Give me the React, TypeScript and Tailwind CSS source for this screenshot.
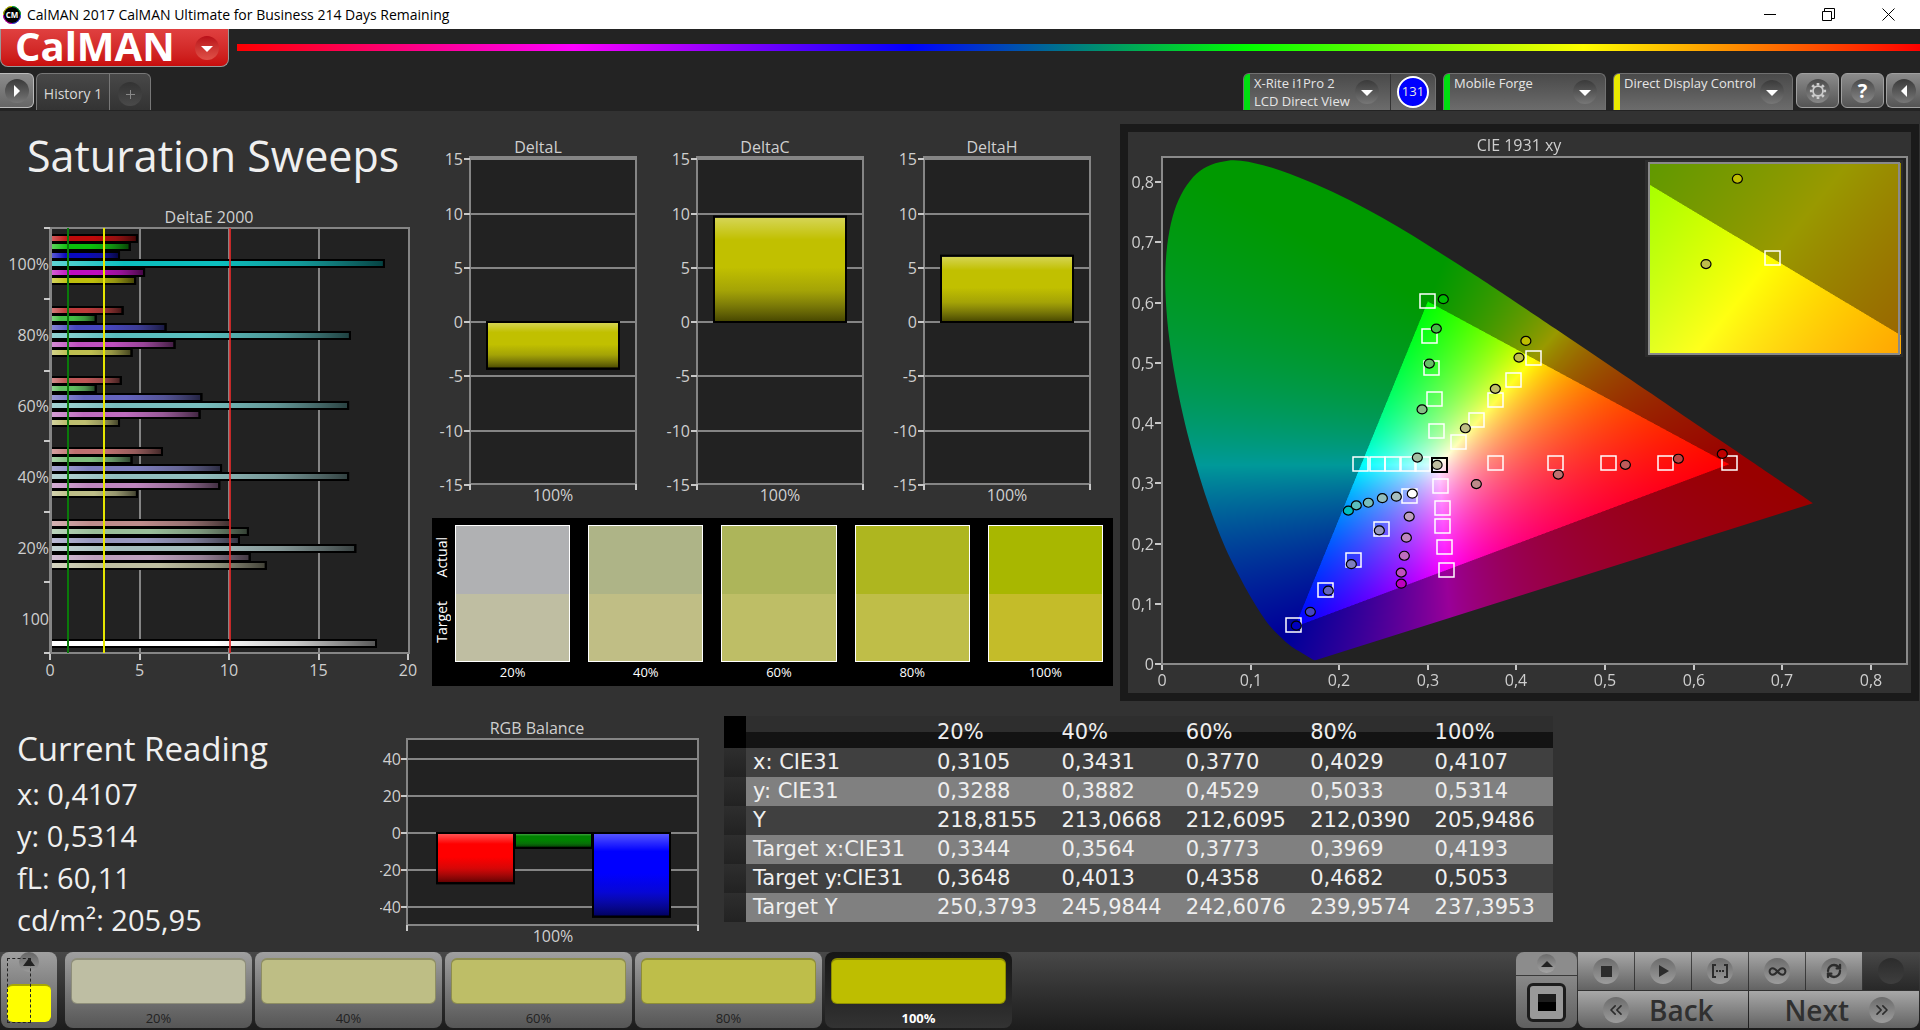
import React, { useEffect, useRef } from 'react';
import { ChevronsLeft, ChevronsRight, Infinity as InfinityIcon, RefreshCw } from 'lucide-react';

type Point = [number, number];

const LEVELS = ['20%', '40%', '60%', '80%', '100%'];

const PATCHES = [
  { label: '20%', actual: '#b0b1b3', target: '#bfbea2', button: '#bebea3' },
  { label: '40%', actual: '#aeb487', target: '#c0be85', button: '#bebe85' },
  { label: '60%', actual: '#adb55a', target: '#bebe66', button: '#bebe67' },
  { label: '80%', actual: '#aeb61f', target: '#bfbe48', button: '#bebe4a' },
  { label: '100%', actual: '#a8b700', target: '#c4bc29', button: '#bebe00' },
];

const READINGS = [
  { name: 'x: CIE31', values: ['0,3105', '0,3431', '0,3770', '0,4029', '0,4107'] },
  { name: 'y: CIE31', values: ['0,3288', '0,3882', '0,4529', '0,5033', '0,5314'] },
  { name: 'Y', values: ['218,8155', '213,0668', '212,6095', '212,0390', '205,9486'] },
  { name: 'Target x:CIE31', values: ['0,3344', '0,3564', '0,3773', '0,3969', '0,4193'] },
  { name: 'Target y:CIE31', values: ['0,3648', '0,4013', '0,4358', '0,4682', '0,5053'] },
  { name: 'Target Y', values: ['250,3793', '245,9844', '242,6076', '239,9574', '237,3953'] },
];

const DELTA_E = [
  { y: 33, colors: ['#be0a0a', '#0abe0a', '#0a0abe', '#0cbebe', '#be0cbe', '#bebe0c'], values: [4.8, 4.4, 3.8, 18.6, 5.2, 4.7] },
  { y: 105, colors: ['#be3a3a', '#44be44', '#4646be', '#5abebe', '#be50be', '#bebe50'], values: [4, 2.5, 6.4, 16.7, 6.9, 4.5] },
  { y: 175, colors: ['#be5656', '#60be60', '#6464be', '#78bebe', '#be6cbe', '#bebe70'], values: [3.9, 2.5, 8.4, 16.6, 8.3, 3.8] },
  { y: 246, colors: ['#be7070', '#7ebe7e', '#7e7ebe', '#92bebe', '#be86be', '#bebe88'], values: [6.2, 4.5, 9.5, 16.6, 9.4, 4.8] },
  { y: 318, colors: ['#be8c8c', '#9abe9a', '#9898be', '#a6bebe', '#bea0be', '#bebea0'], values: [10, 11, 10.5, 17, 11.1, 12] },
];

// Spectral locus, CIE 1931 2 degree observer
const LOCUS: Point[] = [
  [0.1741, 0.005], [0.1714, 0.0051], [0.1644, 0.0109], [0.1566, 0.0177], [0.144, 0.0297], [0.1241, 0.0578],
  [0.1096, 0.0868], [0.0913, 0.1327], [0.0687, 0.2007], [0.0454, 0.295], [0.0235, 0.4127], [0.0082, 0.5384],
  [0.0039, 0.6548], [0.0139, 0.7502], [0.0389, 0.812], [0.0743, 0.8338], [0.1142, 0.8262], [0.1547, 0.8059],
  [0.1929, 0.7816], [0.2296, 0.7543], [0.2658, 0.7243], [0.3016, 0.6923], [0.3373, 0.6589], [0.3731, 0.6245],
  [0.4441, 0.5547], [0.5125, 0.4866], [0.5752, 0.4242], [0.627, 0.3725], [0.6658, 0.334], [0.6915, 0.3083],
  [0.719, 0.2809], [0.7347, 0.2653],
];

const TARGETS: Point[] = [
  [0.299, 0.601], [0.3017, 0.543], [0.304, 0.4895], [0.3074, 0.439], [0.309, 0.3846],
  [0.2239, 0.3297], [0.2423, 0.3297], [0.26, 0.3297], [0.2777, 0.3297], [0.2938, 0.3297],
  [0.4185, 0.5055], [0.3958, 0.469], [0.3762, 0.436], [0.3548, 0.404], [0.3341, 0.3666],
  [0.3762, 0.3316], [0.4436, 0.3316], [0.5038, 0.3316], [0.5673, 0.3316], [0.6396, 0.3316],
  [0.3141, 0.294], [0.3164, 0.2573], [0.3164, 0.2273], [0.3183, 0.1923], [0.32, 0.155],
  [0.279, 0.2766], [0.2476, 0.223], [0.216, 0.1705], [0.184, 0.1205], [0.148, 0.0624],
];

const MEASURED: [number, number, string][] = [
  [0.3175, 0.6038, '#00be00'], [0.3096, 0.555, '#42be42'], [0.3017, 0.497, '#66be66'], [0.2935, 0.4208, '#85be85'], [0.2882, 0.341, '#a2bea2'],
  [0.4107, 0.5345, '#bebe00'], [0.4029, 0.507, '#bebe4a'], [0.3762, 0.455, '#bebe66'], [0.3424, 0.3896, '#bebe85'], [0.3105, 0.3288, '#bebea2'],
  [0.6324, 0.347, '#be0000'], [0.5828, 0.339, '#be4242'], [0.523, 0.329, '#be5a5a'], [0.4473, 0.3128, '#be7070'], [0.3548, 0.297, '#be8a8a'],
  [0.2103, 0.2529, '#00bebe'], [0.2193, 0.2616, '#5abebe'], [0.2329, 0.266, '#78bebe'], [0.2487, 0.2735, '#92bebe'], [0.2645, 0.276, '#a6bebe'],
  [0.27, 0.1317, '#be00be'], [0.27, 0.15, '#be50be'], [0.2735, 0.178, '#be6cbe'], [0.2758, 0.208, '#be86be'], [0.279, 0.243, '#bea0be'],
  [0.1516, 0.062, '#0000be'], [0.1674, 0.085, '#4646be'], [0.1877, 0.12, '#6464be'], [0.2137, 0.164, '#7e7ebe'], [0.2453, 0.22, '#9898be'],
  [0.2825, 0.281, '#ffffff'],
];

const Defs: React.FC = () => (
  <svg className="absolute h-0 w-0" aria-hidden="true">
    <defs>
      <linearGradient id="gloss-x" x1="0" y1="0" x2="1" y2="0">
        <stop offset="0" stopColor="#fff" stopOpacity="0.35" />
        <stop offset="0.22" stopColor="#fff" stopOpacity="0" />
        <stop offset="0.5" stopColor="#222" stopOpacity="0" />
        <stop offset="0.75" stopColor="#222" stopOpacity="0.25" />
        <stop offset="1" stopColor="#000" stopOpacity="0.66" />
      </linearGradient>
      <linearGradient id="gloss-y" x1="0" y1="0" x2="0" y2="1">
        <stop offset="0" stopColor="#fff" stopOpacity="0.35" />
        <stop offset="0.22" stopColor="#fff" stopOpacity="0" />
        <stop offset="0.48" stopColor="#222" stopOpacity="0" />
        <stop offset="0.7" stopColor="#222" stopOpacity="0.18" />
        <stop offset="1" stopColor="#000" stopOpacity="0.64" />
      </linearGradient>
    </defs>
  </svg>
);

const GlossyBar: React.FC<{ x: number; y: number; w: number; h: number; color: string; gloss: 'x' | 'y' }> = ({ x, y, w, h, color, gloss }) => (
  <g stroke="#000" strokeWidth="2">
    <rect x={x} y={y} width={w} height={h} fill={color} />
    <rect x={x} y={y} width={w} height={h} fill={gloss === 'x' ? 'url(#gloss-x)' : 'url(#gloss-y)'} />
  </g>
);

const DeltaEChart: React.FC = () => {
  const px = (v: number) => 50 + v * 17.9;
  return (
    <svg viewBox="0 0 432 480" className="w-full" fontFamily="'Open Sans', sans-serif" fontSize="16" fill="#cfcfcf">
      <text x="209" y="18" textAnchor="middle">DeltaE 2000</text>
      <rect x="50" y="23" width="359" height="425" fill="#222" />
      <g stroke="#858585" strokeWidth="2" fill="none">
        {[5, 10, 15].map((v) => <path key={v} d={`M${Math.round(px(v))} 23V448`} />)}
        <rect x="50" y="23" width="359" height="425" />
      </g>
      <g stroke="#c8c8c8" strokeWidth="2">
        {[23, 94, 166, 236, 307, 377, 448].map((y) => <path key={y} d={`M44 ${y}H50`} />)}
        {[0, 5, 10, 15, 20].map((v) => <path key={v} d={`M${Math.round(px(v))} 449V455`} />)}
      </g>
      {DELTA_E.map((group) =>
        group.values.map((v, i) => (
          <GlossyBar key={`${group.y}-${i}`} x={51} y={group.y - 3 + Math.round(i * 8.4)} w={v * 17.9} h={7} color={group.colors[i]} gloss="x" />
        ))
      )}
      <GlossyBar x={51} y={435} w={325} h={7} color="#fff" gloss="x" />
      <path d="M51 23V448" stroke="#858585" strokeWidth="2" />
      <g strokeWidth="2">
        <path d="M68 23V448" stroke="#0a7a0a" />
        <path d="M104 23V448" stroke="#e6e600" />
        <path d="M230 23V448" stroke="#e02828" strokeOpacity="0.85" />
      </g>
      {['100%', '80%', '60%', '40%', '20%', '100'].map((label, i) => (
        <text key={i} x="49" y={65 + i * 71} textAnchor="end">{label}</text>
      ))}
      {[0, 5, 10, 15, 20].map((v) => (
        <text key={v} x={px(v)} y="471" textAnchor="middle">{v}</text>
      ))}
    </svg>
  );
};

const DeltaChart: React.FC<{ title: string; value: number }> = ({ title, value }) => {
  const py = (v: number) => 187 - v * 10.85;
  return (
    <svg viewBox="0 0 227 380" className="w-full" fontFamily="'Open Sans', sans-serif" fontSize="16" fill="#cfcfcf">
      <text x="102" y="18" textAnchor="middle">{title}</text>
      <rect x="34" y="22" width="166" height="327" fill="#222" />
      <g stroke="#858585" strokeWidth="2" fill="none">
        <rect x="34" y="22" width="166" height="327" />
        {[15, 10, 5, 0, -5, -10].map((v) => <path key={v} d={`M34 ${Math.round(py(v))}H200`} />)}
      </g>
      <g stroke="#c8c8c8" strokeWidth="2">
        {[15, 10, 5, 0, -5, -10, -15].map((v) => <path key={v} d={`M28 ${Math.round(py(v))}H34`} />)}
        <path d="M34 349V355M200 349V355" />
      </g>
      <GlossyBar x={51} y={value > 0 ? py(value) : 187} w={132} h={Math.abs(value) * 10.85} color="#c1c000" gloss="y" />
      {[15, 10, 5, 0, -5, -10, -15].map((v) => (
        <text key={v} x="27" y={Math.round(py(v)) + 6} textAnchor="end">{v}</text>
      ))}
      <text x="117" y="366" textAnchor="middle">100%</text>
    </svg>
  );
};

const RgbBalance: React.FC = () => {
  const py = (v: number) => 115 - v * 1.86;
  const bars = [
    { x: 57, value: 27, color: '#ff0000' },
    { x: 135, value: 8, color: '#008200' },
    { x: 213, value: 45, color: '#0000ff' },
  ];
  return (
    <svg viewBox="0 0 334 230" className="w-full" fontFamily="'Open Sans', sans-serif" fontSize="16" fill="#cfcfcf">
      <text x="157" y="16" textAnchor="middle">RGB Balance</text>
      <rect x="27" y="21" width="291" height="186" fill="#222" />
      <g stroke="#858585" strokeWidth="2" fill="none">
        <rect x="27" y="21" width="291" height="186" />
        {[40, 20, 0, -20, -40].map((v) => <path key={v} d={`M27 ${Math.round(py(v))}H318`} />)}
      </g>
      <g stroke="#c8c8c8" strokeWidth="2">
        {[40, 20, 0, -20, -40].map((v) => <path key={v} d={`M21 ${Math.round(py(v))}H27`} />)}
        <path d="M27 207V213M318 207V213" />
      </g>
      {bars.map((b) => <GlossyBar key={b.x} x={b.x} y={115} w={77} h={b.value * 1.86} color={b.color} gloss="y" />)}
      {[40, 20, 0, -20, -40].map((v) => (
        <text key={v} x="21" y={Math.round(py(v)) + 6} textAnchor="end">{v}</text>
      ))}
      <text x="173" y="224" textAnchor="middle">100%</text>
    </svg>
  );
};

// Chromaticity plot geometry
const cx = (v: number) => 34 + v * 886;
const cy = (v: number) => 531 - v * 602.5;
const insetX = (v: number) => 644 + (v - 0.4193) * 4024;
const insetY = (v: number) => 126 - (v - 0.5053) * 3036;

// Linear Rec.709 colour at full brightness; dimmed outside the triangle
function chromaColor(x: number, y: number): [number, number, number] {
  const X = x / y;
  const Z = (1 - x - y) / y;
  let r = 3.2406 * X - 1.5372 - 0.4986 * Z;
  let g = -0.9689 * X + 1.8758 + 0.0415 * Z;
  let b = 0.0557 * X - 0.204 + 1.057 * Z;
  const outside = Math.min(r, g, b) < 0;
  r = Math.max(r, 0);
  g = Math.max(g, 0);
  b = Math.max(b, 0);
  const k = (outside ? 153 : 255) / Math.max(r, g, b);
  return [r * k, g * k, b * k];
}

function fillChroma(w: number, h: number, toX: (px: number) => number, toY: (py: number) => number) {
  const canvas = document.createElement('canvas');
  canvas.width = w;
  canvas.height = h;
  const ctx = canvas.getContext('2d')!;
  const image = ctx.createImageData(w, h);
  for (let j = 0; j < h; j++) {
    for (let i = 0; i < w; i++) {
      const sum = [0, 0, 0];
      for (const [dx, dy] of [[0.25, 0.25], [0.75, 0.25], [0.25, 0.75], [0.75, 0.75]]) {
        const c = chromaColor(toX(i + dx), Math.max(toY(j + dy), 0.001));
        sum[0] += c[0];
        sum[1] += c[1];
        sum[2] += c[2];
      }
      const o = (j * w + i) * 4;
      image.data[o] = sum[0] / 4;
      image.data[o + 1] = sum[1] / 4;
      image.data[o + 2] = sum[2] / 4;
      image.data[o + 3] = 255;
    }
  }
  ctx.putImageData(image, 0, 0);
  return canvas;
}

const ChromaCanvas: React.FC = () => {
  const ref = useRef<HTMLCanvasElement>(null);

  useEffect(() => {
    const ctx = ref.current!.getContext('2d')!;
    ctx.fillStyle = '#222';
    ctx.fillRect(34, 24, 746, 507);

    // smooth curve through the locus points, closed by the purple line
    const pts = LOCUS.map(([x, y]) => [cx(x), cy(y)]);
    ctx.save();
    ctx.beginPath();
    ctx.moveTo(pts[0][0], pts[0][1]);
    for (let i = 0; i < pts.length - 1; i++) {
      const p0 = pts[Math.max(i - 1, 0)];
      const p1 = pts[i];
      const p2 = pts[i + 1];
      const p3 = pts[Math.min(i + 2, pts.length - 1)];
      ctx.bezierCurveTo(
        p1[0] + (p2[0] - p0[0]) / 6, p1[1] + (p2[1] - p0[1]) / 6,
        p2[0] - (p3[0] - p1[0]) / 6, p2[1] - (p3[1] - p1[1]) / 6,
        p2[0], p2[1]
      );
    }
    ctx.closePath();
    ctx.clip();
    ctx.drawImage(fillChroma(700, 531, (px) => px / 886, (py) => (531 - py) / 602.5), 34, 0);
    ctx.restore();

    ctx.fillStyle = '#2c2c2c';
    ctx.fillRect(517, 28, 258, 197);
    ctx.drawImage(
      fillChroma(252, 191, (px) => 0.4193 + (521 + px - 644) / 4024, (py) => 0.5053 + (126 - 31 - py) / 3036),
      521, 31
    );
  }, []);

  return <canvas ref={ref} width={783} height={561} className="w-full [grid-area:1/1]" />;
};

const CieChart: React.FC = () => (
  <section className="border-8 border-[#1a1a1a] bg-[#323232]">
    <div className="grid">
      <ChromaCanvas />
      <svg viewBox="0 0 783 561" className="w-full [grid-area:1/1]" fontFamily="'Open Sans', sans-serif" fontSize="16" fill="#cfcfcf">
        <text x="391" y="19" textAnchor="middle">CIE 1931 xy</text>
        <g stroke="#8a8a8a" strokeWidth="2" fill="none">
          <rect x="34" y="25" width="745" height="507" />
          <rect x="521" y="31" width="250" height="191" />
        </g>
        <g stroke="#c8c8c8" strokeWidth="2">
          {[0, 1, 2, 3, 4, 5, 6, 7, 8].map((n) => (
            <path key={n} d={`M27 ${Math.round(cy(n / 10)) + 1}H33M${Math.round(cx(n / 10))} 533V538`} />
          ))}
        </g>
        {[0, 1, 2, 3, 4, 5, 6, 7, 8].map((n) => (
          <g key={n}>
            <text x="26" y={Math.round(cy(n / 10)) + 7} textAnchor="end">{n ? `0,${n}` : '0'}</text>
            <text x={Math.round(cx(n / 10))} y="554" textAnchor="middle">{n ? `0,${n}` : '0'}</text>
          </g>
        ))}
        <g fill="none" stroke="#fff" strokeWidth="1.5">
          {TARGETS.map(([x, y], i) => (
            <rect key={i} x={Math.round(cx(x)) - 7} y={Math.round(cy(y)) - 7} width="15" height="14" />
          ))}
          <rect x="637" y="119" width="15" height="14" />
        </g>
        <rect x={Math.round(cx(0.313)) - 7} y={Math.round(cy(0.329)) - 7} width="15" height="14" fill="none" stroke="#000" strokeWidth="2" />
        <g stroke="#000" strokeWidth="1.2">
          {MEASURED.map(([x, y, color], i) => (
            <ellipse key={i} cx={cx(x)} cy={cy(y)} rx="5" ry="4.5" fill={color} />
          ))}
          <ellipse cx={insetX(0.4107)} cy={insetY(0.5314)} rx="5" ry="4.5" fill="#bebe00" />
          <ellipse cx={insetX(0.4029)} cy={insetY(0.5033)} rx="5" ry="4.5" fill="#bebe4a" />
        </g>
      </svg>
    </div>
  </section>
);

const TitleBar: React.FC = () => (
  <header className="flex h-[29px] items-center bg-white text-black">
    <svg viewBox="0 0 20 20" className="ml-[2px] h-5 w-5">
      <circle cx="10" cy="10" r="9" fill="#000" />
      <path d="M1.5 10A8.5 8.5 0 0 1 10 1.5" stroke="#e0e000" fill="none" />
      <path d="M10 1.5A8.5 8.5 0 0 1 18.5 10" stroke="#00c040" fill="none" />
      <path d="M18.5 10A8.5 8.5 0 0 1 10 18.5" stroke="#4040ff" fill="none" />
      <path d="M10 18.5A8.5 8.5 0 0 1 1.5 10" stroke="#e000c0" fill="none" />
      <text x="10" y="13" textAnchor="middle" fontSize="8" fontWeight="700" fontFamily="'Open Sans', sans-serif" fill="#fff">CM</text>
    </svg>
    <span className="ml-[5px] flex-1 text-[14px] leading-none whitespace-nowrap">CalMAN 2017 CalMAN Ultimate for Business 214 Days Remaining</span>
    <div className="flex items-center pr-[2px]">
      <button aria-label="Minimize" className="flex w-[58px] justify-center">
        <svg width="12" height="12"><path d="M0 5.5H12" stroke="#000" /></svg>
      </button>
      <button aria-label="Restore" className="flex w-[59px] justify-center">
        <svg width="13" height="13" fill="none" stroke="#000"><path d="M0.5 3.5H9.5V12.5H0.5ZM2.5 3.5V0.5H12.5V10.5H9.5" /></svg>
      </button>
      <button aria-label="Close" className="flex w-[60px] justify-center">
        <svg width="13" height="13"><path d="M0.5 0.5L12.5 12.5M12.5 0.5L0.5 12.5" stroke="#000" /></svg>
      </button>
    </div>
  </header>
);

const RoundArrow: React.FC<{ dir: 'down' | 'left' | 'right'; tone?: string }> = ({ dir, tone = 'from-[#3a3a3a] to-[#777]' }) => (
  <span className={`flex h-6 w-6 shrink-0 items-center justify-center rounded-full bg-linear-to-b ${tone}`}>
    <svg width="12" height="12" fill="#fff">
      {dir === 'down' && <path d="M0 4H12L6 10Z" />}
      {dir === 'left' && <path d="M9 0V12L3 6Z" />}
      {dir === 'right' && <path d="M3 0V12L9 6Z" />}
    </svg>
  </span>
);

const DeviceTab: React.FC<{ lines: string[]; strip: string; width: string; badge?: string }> = ({ lines, strip, width, badge }) => (
  <div className={`flex h-[37px] overflow-hidden rounded-t-md border border-b-0 border-[#707070] bg-linear-to-b from-[#4a4a4a] to-[#6c6c6c] ${width}`}>
    <span className={`w-[6px] ${strip}`} />
    <button className="flex flex-1 items-start justify-between pl-1 text-left">
      <span className="text-[13px] leading-[18px] whitespace-nowrap">
        {lines.map((line) => <span key={line} className="block">{line}</span>)}
      </span>
      <span className={badge ? 'mt-[6px] mr-[11px]' : 'mt-[6px] mr-2'}><RoundArrow dir="down" /></span>
    </button>
    {badge && (
      <span className="flex items-center border-l border-[#333] px-[6px]">
        <span className="flex h-8 w-8 items-center justify-center rounded-full border-2 border-white bg-[#0000ff] text-[13px]">{badge}</span>
      </span>
    )}
  </div>
);

const squareButton = 'flex h-[35px] items-center justify-center rounded-md border border-[#a0a0a0] bg-linear-to-b from-[#8c8c8c] to-[#555]';

const TopBar: React.FC = () => (
  <div className="bg-[#232323]">
    <div className="flex h-[44px] items-start">
      <button className="flex h-[38px] w-[229px] items-center justify-between rounded-b-lg border border-t-0 border-[#999] bg-linear-to-b from-[#e04040] to-[#c80c0c] pr-[9px] pl-[14px] text-[40px] leading-none font-bold text-white">
        <span className="-mt-1">CalMAN</span>
        <RoundArrow dir="down" tone="from-[#b80c18] to-[#e05048]" />
      </button>
      <div className="mt-[15px] ml-2 h-[7px] flex-1 bg-[linear-gradient(to_right,#f00,#f0f,#00f,#0f0,#ff0,#f00)]" />
    </div>
    <div className="flex h-[38px] items-start text-[#e6e6e6]">
      <button aria-label="Show side panel" className="flex h-[35px] w-[34px] items-center justify-center rounded-r-md border border-l-0 border-[#bbb] bg-linear-to-b from-[#8c8c8c] to-[#666]">
        <RoundArrow dir="right" />
      </button>
      <div className="ml-[2px] flex h-[37px] rounded-t-md border border-b-0 border-[#777] bg-linear-to-b from-[#484848] to-[#333]">
        <button className="w-[73px] border-r border-[#777] pt-[2px] text-[14px] text-[#d8d8d8]">History 1</button>
        <button aria-label="Add history" className="flex w-[40px] items-center justify-center pt-1">
          <span className="flex h-6 w-6 items-center justify-center rounded-full bg-linear-to-b from-[#333] to-[#4a4a4a]">
            <svg width="9" height="9"><path d="M4.5 0V9M0 4.5H9" stroke="#888" /></svg>
          </span>
        </button>
      </div>
      <div className="flex-1" />
      <div className="flex gap-[7px]">
        <DeviceTab lines={['X-Rite i1Pro 2', 'LCD Direct View']} strip="bg-[#00e010]" width="w-[193px]" badge="131" />
        <DeviceTab lines={['Mobile Forge']} strip="bg-[#00e010]" width="w-[163px]" />
        <DeviceTab lines={['Direct Display Control']} strip="bg-[#e8e800]" width="w-[180px]" />
      </div>
      <div className="ml-[3px] flex gap-[2px]">
        <button aria-label="Settings" className={`w-[43px] ${squareButton}`}>
          <span className="flex h-6 w-6 items-center justify-center rounded-full bg-linear-to-b from-[#4a4a4a] to-[#888]">
            <svg viewBox="0 0 20 20" width="18" height="18" fill="none" stroke="#ccc">
              <circle cx="10" cy="10" r="5.5" strokeWidth="2" />
              <path strokeWidth="3" d="M10 1V4M10 16V19M1 10H4M16 10H19M3.6 3.6L5.7 5.7M14.3 14.3L16.4 16.4M3.6 16.4L5.7 14.3M14.3 5.7L16.4 3.6" />
            </svg>
          </span>
        </button>
        <button aria-label="Help" className={`w-[43px] ${squareButton}`}>
          <span className="flex h-6 w-6 items-center justify-center rounded-full bg-linear-to-b from-[#4a4a4a] to-[#888] text-[20px] leading-none font-bold text-white">?</span>
        </button>
        <button aria-label="Collapse" className="flex h-[35px] w-[34px] items-center justify-center rounded-l-md border border-r-0 border-[#a0a0a0] bg-linear-to-b from-[#8c8c8c] to-[#555]">
          <RoundArrow dir="left" />
        </button>
      </div>
    </div>
  </div>
);

const ColorComparison: React.FC = () => (
  <section className="flex h-[168px] bg-black pt-[7px] pr-[10px] text-[13px] text-white">
    <div className="flex h-[137px] w-[23px] flex-col items-start justify-around pb-2 leading-none">
      <span className="rotate-180 text-[14px] leading-5 font-medium [writing-mode:vertical-rl]">Actual</span>
      <span className="rotate-180 text-[14px] leading-5 font-medium [writing-mode:vertical-rl]">Target</span>
    </div>
    <div className="grid flex-1 grid-cols-5 gap-[18px]">
      {PATCHES.map((p) => (
        <figure key={p.label} className="text-center">
          <div className="h-[137px] border border-white">
            <div className="h-[68px]" style={{ backgroundColor: p.actual }} />
            <div className="h-[67px]" style={{ backgroundColor: p.target }} />
          </div>
          <figcaption className="leading-5 font-medium">{p.label}</figcaption>
        </figure>
      ))}
    </div>
  </section>
);

const ReadingTable: React.FC = () => (
  <table className="w-full table-fixed border-collapse text-left font-['DejaVu_Sans',sans-serif] text-[21px] leading-none text-[#efefef]">
    <colgroup>
      <col className="w-[22px]" />
      <col className="w-[185px]" />
      {LEVELS.map((l) => <col key={l} />)}
    </colgroup>
    <thead>
      <tr className="h-8">
        <th className="bg-black" />
        <th className="bg-linear-to-b from-[#2e2e2e] from-50% to-[#131313] to-50%" />
        {LEVELS.map((l) => (
          <th key={l} scope="col" className="bg-linear-to-b from-[#2e2e2e] from-50% to-[#131313] to-50% pl-[6px] font-normal">{l}</th>
        ))}
      </tr>
    </thead>
    <tbody>
      {READINGS.map((row) => (
        <tr key={row.name} className="h-[29px] odd:bg-[#404040] even:bg-[#808080]">
          <td className="bg-linear-to-b from-[#2e2e2e] to-[#222]" />
          <th scope="row" className="pl-[7px] font-normal whitespace-nowrap">{row.name}</th>
          {row.values.map((v, i) => <td key={i} className="pl-[6px]">{v}</td>)}
        </tr>
      ))}
    </tbody>
  </table>
);

const Disc: React.FC<{ children?: React.ReactNode }> = ({ children }) => (
  <span className="flex h-[26px] w-[26px] items-center justify-center rounded-full bg-linear-to-b from-[#6c6c6c] to-[#9c9c9c] text-[#2c2c2c]">{children}</span>
);

const transport = 'flex h-[38px] items-center justify-center bg-linear-to-b from-[#a8a8a8] to-[#636363]';

const Footer: React.FC = () => (
  <footer className="flex h-[78px] items-start bg-linear-to-b from-[#484848] to-[#1c1c1c]">
    <button aria-label="Pattern window" className="relative ml-px flex h-[76px] w-[56px] flex-col items-center justify-between rounded-lg bg-linear-to-b from-[#a0a0a0] to-[#5c5c5c] pb-[6px]">
      <span className="flex h-5 w-5 items-center justify-center rounded-full bg-linear-to-b from-[#666] to-[#999]">
        <svg width="12" height="8" fill="#222"><path d="M0 8L6 0L12 8Z" /></svg>
      </span>
      <span className="h-[38px] w-[44px] rounded-md border-t-2 border-[#a8a800] bg-[#ffff00]" />
      <span className="absolute top-[6px] left-[6px] h-[65px] w-6 border border-dashed border-[#222]" />
    </button>
    <div className="ml-2 flex gap-[3px]">
      {PATCHES.map((p) => {
        const active = p.label === '100%';
        return (
          <button
            key={p.label}
            className={`flex h-[76px] w-[187px] flex-col items-center rounded-lg pt-[6px] text-[13px] ${
              active ? 'bg-linear-to-b from-[#161616] to-[#333] font-bold text-white' : 'bg-linear-to-b from-[#a0a0a0] to-[#565656] text-[#222]'
            }`}
          >
            <span className="h-[46px] w-[175px] rounded-md border border-t-2 border-black/25" style={{ backgroundColor: p.button }} />
            <span className="mt-1 leading-5">{p.label}</span>
          </button>
        );
      })}
    </div>
    <div className="flex-1" />
    <div className="mr-px flex w-[61px] flex-col gap-px">
      <button aria-label="Expand" className="flex h-[23px] items-center justify-center rounded-t-lg bg-[#8c8c8c]">
        <span className="flex h-[19px] w-[19px] items-center justify-center rounded-full bg-linear-to-b from-[#6c6c6c] to-[#a4a4a4]">
          <svg width="12" height="6" fill="#222"><path d="M0 6L6 0L12 6Z" /></svg>
        </span>
      </button>
      <button aria-label="Stop reading" className="flex h-[52px] items-center justify-center rounded-b-lg bg-linear-to-b from-[#888] to-[#606060]">
        <span className="flex h-[39px] w-[39px] items-center justify-center rounded-md border-[3px] border-[#1c1c1c] bg-[#999]">
          <span className="h-[17px] w-[18px] bg-linear-to-b from-[#1c1c1c] from-50% to-black to-50%" />
        </span>
      </button>
    </div>
    <div className="mr-px grid w-[341px] grid-cols-6 gap-px">
      <button aria-label="Stop" className={transport}><Disc><svg width="11" height="11" fill="currentColor"><rect width="11" height="11" /></svg></Disc></button>
      <button aria-label="Play" className={transport}><Disc><svg width="11" height="12" fill="currentColor"><path d="M1 0V12L11 6Z" /></svg></Disc></button>
      <button aria-label="Step" className={transport}>
        <Disc>
          <svg width="16" height="14" fill="none" stroke="currentColor" strokeWidth="2"><path d="M4 1H1V13H4M12 1H15V13H12" /><path d="M4 7H12" strokeDasharray="2 1" /></svg>
        </Disc>
      </button>
      <button aria-label="Continuous" className={transport}><Disc><InfinityIcon size={19} strokeWidth={2.5} /></Disc></button>
      <button aria-label="Repeat" className={transport}><Disc><RefreshCw size={16} strokeWidth={3.5} /></Disc></button>
      <button aria-label="Idle" disabled className="flex h-[38px] items-center justify-center bg-linear-to-b from-[#484848] to-[#282828]">
        <span className="h-[26px] w-[26px] rounded-full bg-linear-to-b from-[#2c2c2c] to-[#3e3e3e]" />
      </button>
      <button className="col-span-3 flex h-[37px] items-center gap-5 rounded-bl-lg bg-linear-to-b from-[#a8a8a8] to-[#636363] pl-[25px] text-[28px] leading-none font-semibold text-[#303030]">
        <Disc><ChevronsLeft size={20} /></Disc>
        Back
      </button>
      <button className="col-span-3 flex h-[37px] items-center justify-end gap-5 rounded-br-lg bg-linear-to-b from-[#a8a8a8] to-[#636363] pr-6 text-[28px] leading-none font-semibold text-[#303030]">
        Next
        <Disc><ChevronsRight size={20} /></Disc>
      </button>
    </div>
  </footer>
);

export default function App() {
  return (
    <div className="flex min-h-screen flex-col bg-[#323232] font-['Open_Sans','Noto_Sans',sans-serif]">
      <Defs />
      <TitleBar />
      <TopBar />
      <main className="flex-1">
        <div className="grid grid-cols-[432fr_688fr_800fr]">
          <div>
            <h1 className="pt-[21px] pl-[27px] text-[43px] leading-[48px] whitespace-nowrap text-[#efefef]">Saturation Sweeps</h1>
            <div className="pt-[25px]"><DeltaEChart /></div>
          </div>
          <div className="pt-6">
            <div className="grid grid-cols-3 pr-[3px] pl-1">
              <DeltaChart title="DeltaL" value={-4.3} />
              <DeltaChart title="DeltaC" value={9.7} />
              <DeltaChart title="DeltaH" value={6.1} />
            </div>
            <div className="mt-[3px] pr-[7px]"><ColorComparison /></div>
          </div>
          <div className="pt-[13px] pr-px"><CieChart /></div>
        </div>
        <div className="grid grid-cols-[380fr_344fr_829fr_367fr] pt-[11px]">
          <div className="pt-4 pl-[17px] text-[29px] leading-[42px] text-[#efefef]">
            <h2 className="pb-[3px] text-[33px]">Current Reading</h2>
            <p>x: 0,4107</p>
            <p>y: 0,5314</p>
            <p>fL: 60,11</p>
            <p>cd/m²: 205,95</p>
          </div>
          <div className="pt-[6px] pr-[10px]"><RgbBalance /></div>
          <div className="pt-[4px]"><ReadingTable /></div>
        </div>
      </main>
      <Footer />
    </div>
  );
}
